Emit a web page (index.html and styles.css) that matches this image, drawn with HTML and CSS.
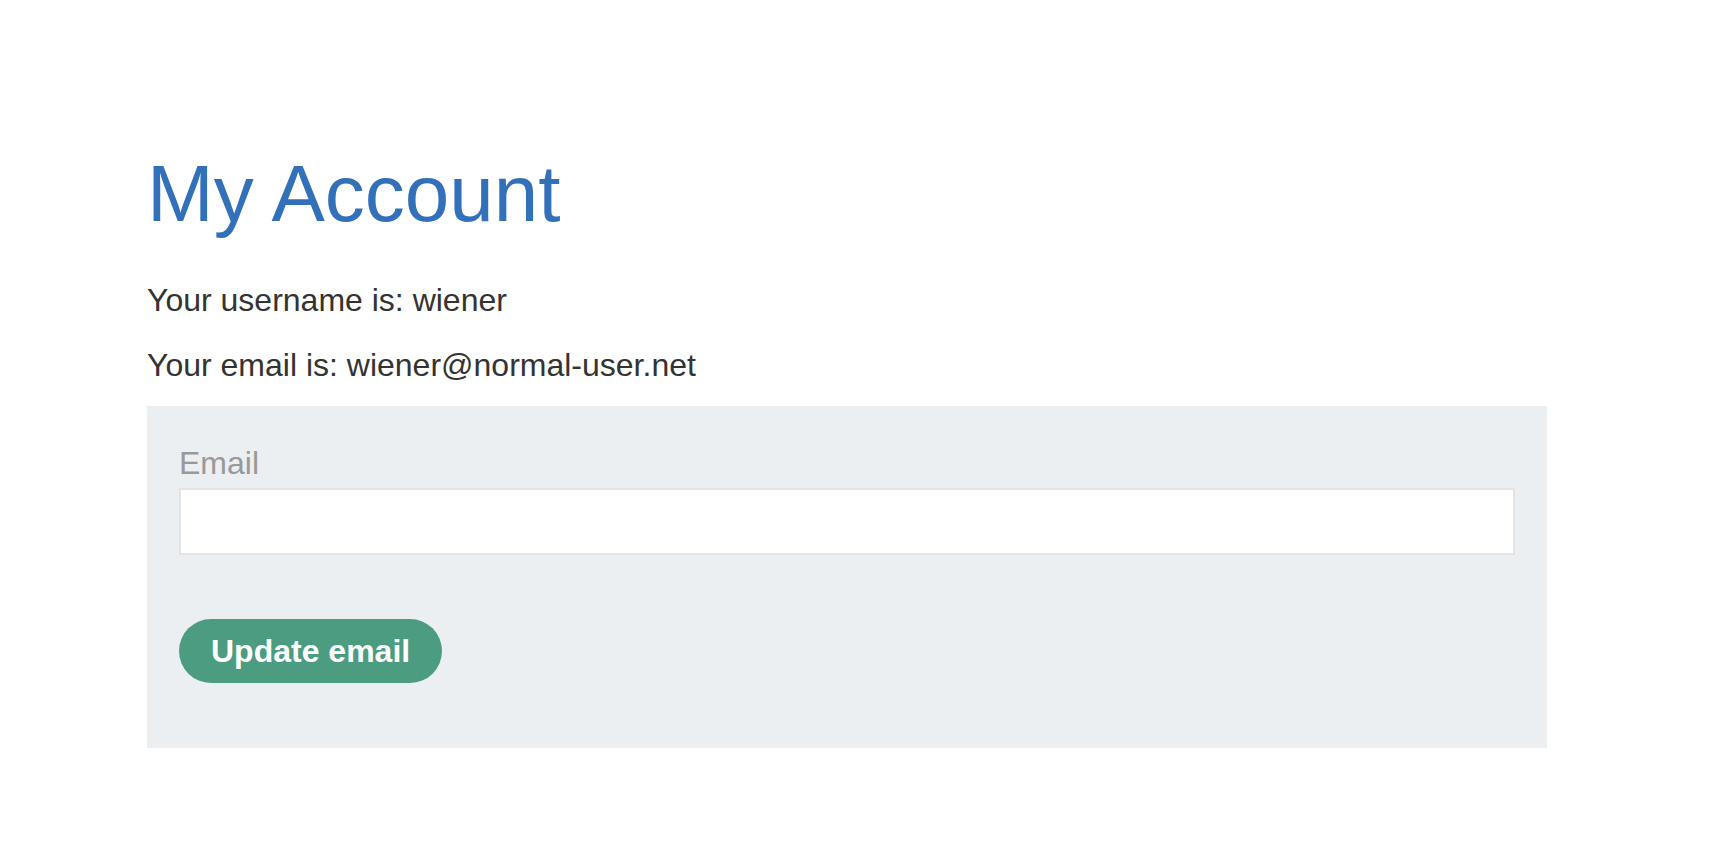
FILE: index.html
```html
<!DOCTYPE html>
<html lang="en">
<head>
<meta charset="utf-8">
<title>My Account</title>
<link rel="stylesheet" href="styles.css">
</head>
<body>
<main class="container">
  <h1 class="title">My Account</h1>
  <p class="info">Your username is: wiener</p>
  <p class="info info-last">Your email is: wiener@normal-user.net</p>
  <form class="panel">
    <label class="label" for="email">Email</label>
    <input class="input" id="email" name="email" type="email">
    <button class="button" type="button">Update email</button>
  </form>
</main>
</body>
</html>
```

FILE: styles.css
```css
html, body {
  margin: 0;
  padding: 0;
  background: #ffffff;
}

body {
  font-family: "Liberation Sans", Arial, Helvetica, sans-serif;
  color: #333332;
}

.container {
  width: 1400px;
  padding: 148px 0 0 147px;
}

.title {
  margin: 0 0 38px 0;
  font-size: 80px;
  line-height: 92px;
  font-weight: 400;
  color: #3270b9;
}

.info {
  margin: 0 0 20px 0;
  font-size: 32px;
  line-height: 45px;
}

.info-last {
  margin-bottom: 18px;
}

.panel {
  display: flex;
  flex-direction: column;
  align-items: flex-start;
  background: #ebeff2;
  padding: 37px 32px 65px 32px;
}

.label {
  font-size: 32px;
  line-height: 40px;
  color: #999999;
  margin-bottom: 5px;
}

.input {
  box-sizing: border-box;
  width: 100%;
  height: 67px;
  margin: 0 0 64px 0;
  border: 2px solid #e4e4e4;
  background: #ffffff;
  font-family: inherit;
  font-size: 32px;
  padding: 0 16px;
  outline: none;
}

.button {
  box-sizing: border-box;
  height: 64px;
  padding: 0 32px;
  border: none;
  border-radius: 32px;
  background: #4c9c82;
  color: #ffffff;
  font-family: inherit;
  font-size: 32px;
  font-weight: 700;
  line-height: 64px;
  cursor: pointer;
}
```
